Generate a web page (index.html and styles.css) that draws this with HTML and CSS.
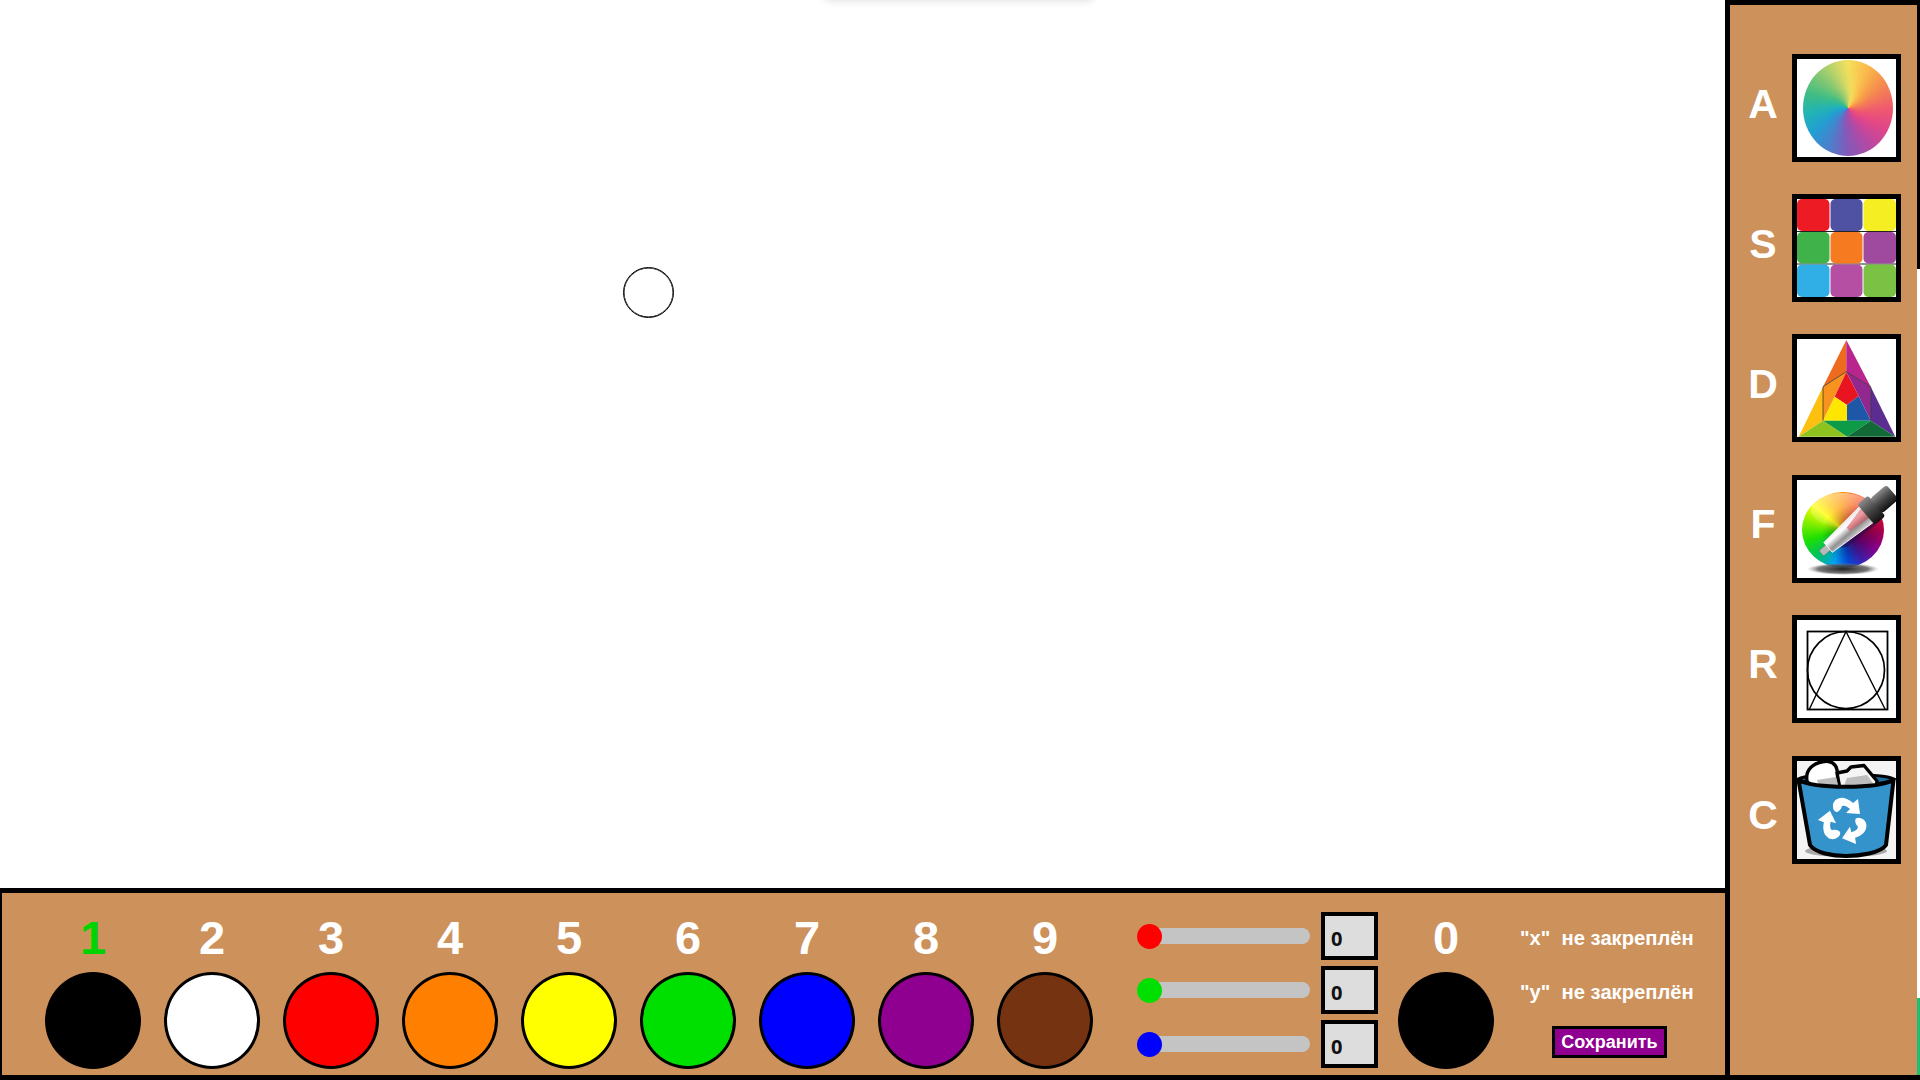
FILE: index.html
```html
<!DOCTYPE html>
<html lang="ru">
<head>
<meta charset="utf-8">
<title>Рисовалка</title>
<link rel="stylesheet" href="styles.css">
</head>
<body>
<div class="app">
  <div class="main">
    <div class="canvas">
      <div class="toast"></div>
      <div class="cursor"></div>
    </div>
    <div class="palette">
      <div class="swatch"><div class="digit digit-on">1</div><div class="dot dot-black"></div></div>
      <div class="swatch"><div class="digit">2</div><div class="dot dot-white"></div></div>
      <div class="swatch"><div class="digit">3</div><div class="dot dot-red"></div></div>
      <div class="swatch"><div class="digit">4</div><div class="dot dot-orange"></div></div>
      <div class="swatch"><div class="digit">5</div><div class="dot dot-yellow"></div></div>
      <div class="swatch"><div class="digit">6</div><div class="dot dot-green"></div></div>
      <div class="swatch"><div class="digit">7</div><div class="dot dot-blue"></div></div>
      <div class="swatch"><div class="digit">8</div><div class="dot dot-purple"></div></div>
      <div class="swatch"><div class="digit">9</div><div class="dot dot-brown"></div></div>
      <div class="mixer">
        <div class="mix-row"><input class="slider slider-r" type="range" min="0" max="255" value="0"><input class="val" type="text" value="0"></div>
        <div class="mix-row"><input class="slider slider-g" type="range" min="0" max="255" value="0"><input class="val" type="text" value="0"></div>
        <div class="mix-row"><input class="slider slider-b" type="range" min="0" max="255" value="0"><input class="val" type="text" value="0"></div>
      </div>
      <div class="swatch swatch-mix"><div class="digit">0</div><div class="dot dot-black"></div></div>
      <div class="status">
        <div class="status-line">"x"  не закреплён</div>
        <div class="status-line">"у"  не закреплён</div>
        <button class="save" type="button">Сохранить</button>
      </div>
    </div>
  </div>

  <div class="sidebar">
    <div class="tool">
      <div class="key">A</div>
      <div class="icon">
        <div class="wheel"></div>
      </div>
    </div>

    <div class="tool">
      <div class="key">S</div>
      <div class="icon">
        <svg class="pic" viewBox="0 0 99 98">
          <rect x="0" y="32" width="99" height="1" fill="#222"/>
          <rect x="0" y="64.500" width="99" height="1" fill="#222"/>
          <rect x="0" y="0" width="32.500" height="32" rx="5" fill="#ed1c24"/>
          <rect x="33.500" y="0" width="32" height="32" rx="5" fill="#4f52a3"/>
          <rect x="66.500" y="0" width="32.500" height="32" rx="5" fill="#f4ee22"/>
          <rect x="0" y="33" width="32.500" height="31.500" rx="5" fill="#3fb34a"/>
          <rect x="33.500" y="33" width="32" height="31.500" rx="5" fill="#f57a20"/>
          <rect x="66.500" y="33" width="32.500" height="31.500" rx="5" fill="#9f4a9e"/>
          <rect x="0" y="65.500" width="32.500" height="32.500" rx="5" fill="#2fafe6"/>
          <rect x="33.500" y="65.500" width="32" height="32.500" rx="5" fill="#b44fa3"/>
          <rect x="66.500" y="65.500" width="32.500" height="32.500" rx="5" fill="#7bc143"/>
        </svg>
      </div>
    </div>

    <div class="tool">
      <div class="key">D</div>
      <div class="icon">
        <svg class="pic" viewBox="0 0 99 98">
          <polygon points="49.300,1 49.300,32.700 26,47.700" fill="#ee6a1f"/>
          <polygon points="49.300,1 73.700,47.700 49.300,32.700" fill="#b8258c"/>
          <polygon points="26,47.700 26,81.700 1.700,97.700" fill="#fdc010"/>
          <polygon points="73.700,47.700 98.300,97.700 73.700,81.700" fill="#5c2d91"/>
          <polygon points="49.300,32.700 37.700,57.700 26,81.700 26,47.700" fill="#f7931e"/>
          <polygon points="49.300,32.700 73.700,47.700 73.700,81.700 61.700,57" fill="#92278f"/>
          <polygon points="49.300,33 61.700,57 50,66 37.700,57.700" fill="#e8141f"/>
          <polygon points="37.700,57.700 50,66 50,81.700 26,81.700" fill="#ffe600"/>
          <polygon points="61.700,57 73.700,81.700 50,81.700 50,66" fill="#1f57a8"/>
          <polygon points="26,81.700 73.700,81.700 50,97.700" fill="#0d9b48"/>
          <polygon points="1.700,97.700 26,81.700 50,97.700" fill="#8dc21f"/>
          <polygon points="50,97.700 73.700,81.700 98.300,97.700" fill="#126b36"/>
          <path d="M26 81.700V47.700L49.300 32.700L73.700 47.700V81.700" fill="none" stroke="#2a2a2a" stroke-width=".7"/>
        </svg>
      </div>
    </div>

    <div class="tool">
      <div class="key">F</div>
      <div class="icon">
        <div class="sphere"></div>
        <svg class="pic pic-over" viewBox="0 0 99 98">
          <defs>
            <radialGradient id="shadow">
              <stop offset="0" stop-color="#222"/>
              <stop offset=".7" stop-color="#555" stop-opacity=".8"/>
              <stop offset="1" stop-color="#999" stop-opacity="0"/>
            </radialGradient>
            <radialGradient id="shade" cx=".66" cy=".58" r=".42">
              <stop offset="0" stop-color="#200020" stop-opacity=".6"/>
              <stop offset="1" stop-color="#200020" stop-opacity="0"/>
            </radialGradient>
            <linearGradient id="gloss" x1="0" y1="0" x2="0" y2="1">
              <stop offset="0" stop-color="#fff" stop-opacity=".5"/>
              <stop offset="1" stop-color="#fff" stop-opacity=".05"/>
            </linearGradient>
            <linearGradient id="glass" x1="0" y1="0" x2="0" y2="1">
              <stop offset="0" stop-color="#e4e4e4"/>
              <stop offset=".3" stop-color="#fff"/>
              <stop offset=".65" stop-color="#8f8f8f"/>
              <stop offset="1" stop-color="#ddd"/>
            </linearGradient>
            <linearGradient id="rubber" x1="0" y1="0" x2="0" y2="1">
              <stop offset="0" stop-color="#8a8a8a"/>
              <stop offset=".5" stop-color="#444"/>
              <stop offset="1" stop-color="#111"/>
            </linearGradient>
          </defs>
          <ellipse cx="46" cy="89" rx="36" ry="6" fill="url(#shadow)"/>
          <ellipse cx="46" cy="50" rx="41" ry="38" fill="url(#shade)"/>
          <ellipse cx="45" cy="30" rx="31" ry="17" fill="url(#gloss)"/>
          <g transform="translate(24.300 73.300) rotate(-40.700)">
            <path d="M18 8 L60 10 L60 14 L24 12Z" fill="#2b0a4a" fill-opacity=".6"/>
            <rect x="0" y="-3.500" width="11" height="7" rx="1.500" fill="#b9b9b9" stroke="#777" stroke-width=".5"/>
            <polygon points="9,-6.500 60,-10.500 60,10.500 9,6.500" fill="url(#glass)" stroke="#fff" stroke-width=".8"/>
            <polygon points="36,-3 60,-8 60,4 36,2" fill="#e23a48" fill-opacity=".5"/>
            <rect x="59" y="-13.500" width="14" height="27" rx="3" fill="url(#rubber)"/>
            <rect x="72" y="-9.500" width="22" height="19" rx="3.500" fill="url(#rubber)"/>
          </g>
        </svg>
      </div>
    </div>

    <div class="tool">
      <div class="key">R</div>
      <div class="icon">
        <svg class="pic" viewBox="0 0 99 98">
          <rect x="10.500" y="11.500" width="80" height="78" fill="none" stroke="#000" stroke-width="1.800"/>
          <ellipse cx="49" cy="50" rx="38.500" ry="38.500" fill="none" stroke="#000" stroke-width="1.700"/>
          <path d="M12 90 L49 11.500 L88.500 90" fill="none" stroke="#000" stroke-width="1.400"/>
        </svg>
      </div>
    </div>

    <div class="tool tool-last">
      <div class="key key-down">C</div>
      <div class="icon">
        <svg class="pic pic-bin" viewBox="0 0 99 98">
          <ellipse cx="49" cy="90" rx="41" ry="6" fill="#a9a9a9"/>
          <path d="M1 18 C14 12 84 12 97 18 C84 27 14 27 1 18Z" fill="#1e6f9f" stroke="#000" stroke-width="3"/>
          <path d="M10 20 C8 9 16 2 27 0.500 C34 -.5 39 3 40 9 L43 28 L14 26Z" fill="#fff" stroke="#000" stroke-width="3.400" stroke-linejoin="round"/>
          <path d="M40 12 L50 10 L54 6 L67 4.500 L80 20 L79 28 L43 28Z" fill="#f5f5f5" stroke="#000" stroke-width="3.400" stroke-linejoin="round"/>
          <path d="M20 19 L39 16 L42 27 L22 26Z M50 17 L70 14 L78 25 L46 27Z" fill="#bdbdbd"/>
          <path d="M1.500 19 C18 28 80 28 96.500 19 L89 84 C84 92 62 95 49 95 C36 95 18 92 13 84Z" fill="#3593cc" stroke="#000" stroke-width="4" stroke-linejoin="round"/>
          <g transform="translate(47 60)" fill="#fff">
            <path id="arrow" d="M-11 -14 C-12 -20 -6 -24 0 -23 C4 -22 7 -20 9 -18 L14 -22 L16 -7 L2 -8 L6 -12 C3 -15 0 -16 -2 -15 C-3 -11 -6 -9 -8 -9 C-10 -10 -11 -12 -11 -14Z"/>
            <use href="#arrow" transform="rotate(120)"/>
            <use href="#arrow" transform="rotate(240)"/>
          </g>
        </svg>
      </div>
    </div>
  </div>

  <div class="edge">
    <div class="edge-black"></div>
    <div class="edge-white"></div>
    <div class="edge-green"></div>
    <div class="edge-base"></div>
  </div>
</div>
</body>
</html>
```

FILE: styles.css
```css
* { box-sizing: border-box; }

html, body {
  margin: 0;
  height: 100%;
  overflow: hidden;
  background: #fff;
  font-family: "Liberation Sans", Arial, sans-serif;
}

.app {
  display: flex;
  width: 1920px;
  height: 1080px;
}

.main {
  width: 1725px;
  display: flex;
  flex-direction: column;
}

.canvas {
  position: relative;
  flex: 1;
  background: #fff;
  overflow: hidden;
}

.toast {
  position: absolute;
  left: 826px;
  top: -12px;
  width: 266px;
  height: 12px;
  box-shadow: 0 0 9px rgba(0, 0, 0, .16);
}

.cursor {
  position: absolute;
  left: 623px;
  top: 267px;
  width: 51px;
  height: 51px;
  border: 1px solid #000;
  border-radius: 50%;
  box-shadow: inset 0 0 0 .5px #000;
}

.palette {
  height: 192px;
  display: flex;
  background: #cd915b;
  border-top: 5px solid #000;
  border-bottom: 5px solid #000;
  border-left: 2px solid #000;
  padding: 16px 0 0 43px;
}

.swatch {
  width: 96px;
  margin-right: 23px;
  display: flex;
  flex-direction: column;
  align-items: center;
}

.swatch-mix {
  margin: 0 0 0 20px;
}

.digit {
  height: 58px;
  line-height: 58px;
  font-size: 47px;
  font-weight: 700;
  color: #fff;
}

.digit-on {
  color: #00d400;
}

.dot {
  width: 96px;
  height: 97px;
  margin-top: 5px;
  border: 3px solid #000;
  border-radius: 50%;
}

.dot-black { background: #000; }
.dot-white { background: #fff; }
.dot-red { background: #f00; }
.dot-orange { background: #ff8000; }
.dot-yellow { background: #ff0; }
.dot-green { background: #00e000; }
.dot-blue { background: #00f; }
.dot-purple { background: #900090; }
.dot-brown { background: #763312; }

.mixer {
  margin: 3px 0 0 21px;
  display: flex;
  flex-direction: column;
  gap: 6px;
}

.mix-row {
  display: flex;
  align-items: center;
  gap: 11px;
}

.slider {
  -webkit-appearance: none;
  appearance: none;
  display: block;
  width: 173px;
  height: 16px;
  margin: 0;
  background: #c4c4c4;
  border-radius: 8px;
}

.slider::-webkit-slider-thumb {
  -webkit-appearance: none;
  appearance: none;
  width: 25px;
  height: 25px;
  border-radius: 50%;
  background: #f00;
}

.slider-g::-webkit-slider-thumb { background: #00e000; }
.slider-b::-webkit-slider-thumb { background: #00f; }

.val {
  width: 57px;
  height: 48px;
  margin: 0;
  padding: 4px 0 0 6px;
  border: 4px solid #000;
  border-radius: 0;
  background: #ddd;
  color: #111;
  font-family: "Open Sans", sans-serif;
  font-size: 20px;
  font-weight: 700;
}

.status {
  margin-left: 26px;
  display: flex;
  flex-direction: column;
  align-items: flex-start;
  padding-top: 18px;
}

.status-line {
  height: 54px;
  line-height: 22px;
  font-size: 20.2px;
  font-weight: 700;
  color: #fff;
  white-space: pre;
}

.save {
  width: 115px;
  height: 32px;
  margin: -9px 0 0 32px;
  padding: 0;
  border: 3px solid #000;
  border-radius: 0;
  background: #900090;
  color: #fff;
  font-family: inherit;
  font-size: 18px;
  font-weight: 700;
}

.sidebar {
  width: 192px;
  height: 1080px;
  background: #cd915b;
  border: 5px solid #000;
  border-width: 5px 0 5px 5px;
  padding-top: 49px;
  display: flex;
  flex-direction: column;
  gap: 32.2px;
}

.tool {
  display: flex;
  align-items: center;
  height: 108px;
}

.tool-last {
  margin-top: 1px;
}

.key {
  width: 62px;
  padding-left: 4px;
  margin-bottom: 8px;
  text-align: center;
  font-size: 41px;
  font-weight: 700;
  color: #fff;
}

.key-down { margin: 12px 0 0; }

.icon {
  position: relative;
  width: 109px;
  height: 108px;
  border: 5px solid #000;
  background: #fff;
}

.pic {
  display: block;
  width: 99px;
  height: 98px;
}

.pic-over {
  position: absolute;
  left: 0;
  top: 0;
}

.pic-bin {
  background: #f4f4f4;
  overflow: hidden;
}

.wheel,
.wheel::before,
.wheel::after {
  border-radius: 50%;
  background: conic-gradient(#f4de4e 0deg, #fbb53c 25deg, #f5823f 55deg, #ee4c63 90deg, #e0367f 120deg, #b03a9c 150deg, #7a4cb4 180deg, #3f74c8 205deg, #0f97d0 235deg, #10aeb0 262deg, #2fb87a 290deg, #7fc467 320deg, #c9d55a 345deg, #f4de4e 360deg);
}

.wheel {
  position: absolute;
  left: 6px;
  top: 1px;
  width: 90px;
  height: 96px;
  opacity: .92;
}

.wheel::before,
.wheel::after {
  content: "";
  position: absolute;
  inset: 0;
  -webkit-mask-image: radial-gradient(closest-side, #000 25%, transparent 85%);
  mask-image: radial-gradient(closest-side, #000 25%, transparent 85%);
}

.wheel::before {
  transform: rotate(10deg);
}

.wheel::after {
  transform: rotate(20deg);
  -webkit-mask-image: radial-gradient(closest-side, #000 8%, transparent 45%);
  mask-image: radial-gradient(closest-side, #000 8%, transparent 45%);
}

.sphere {
  position: absolute;
  left: 5px;
  top: 12px;
  width: 82px;
  height: 76px;
  border-radius: 50%;
  background: conic-gradient(#ff8a00 0deg, #f01030 55deg, #c00050 90deg, #a000a0 118deg, #4a20c0 145deg, #0050e8 170deg, #00a0f0 195deg, #00c060 225deg, #20e000 255deg, #90f000 285deg, #ffff00 310deg, #ffc000 335deg, #ff8a00 360deg);
}

.edge {
  width: 3px;
  height: 1080px;
  display: flex;
  flex-direction: column;
}

.edge-black { height: 269px; background: #000; }
.edge-white { height: 729px; background: #fff; }
.edge-green { height: 77px; background: #1dbf73; }
.edge-base { height: 5px; background: #000; }
```
